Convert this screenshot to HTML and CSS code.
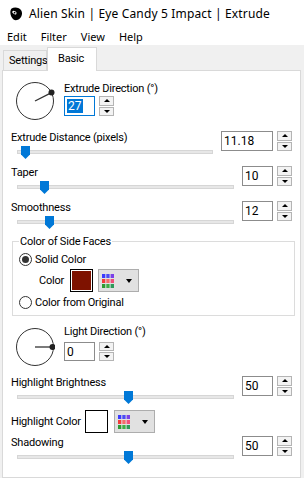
FILE: index.html
```html
<!DOCTYPE html>
<html lang="en">
<head>
<meta charset="UTF-8">
<title>Extrude</title>
<link rel="stylesheet" href="styles.css">
</head>
<body>

<!-- ░░ window title ░░ -->
<header class="titlebar">
  <svg class="app-icon" width="14" height="14" viewBox="0 0 14 14">
    <path d="M2.6 1.6C5.4-.4 10.6.4 12.4 3.8c1.3 2.6.4 5.6-1.6 7.6-1.7 1.8-4.6 2.4-6.6.8C1.6 10.1.1 4.2 2.6 1.6z" fill="#000"/>
    <ellipse cx="5.4" cy="5.6" rx="2.4" ry="1.5" transform="rotate(35 5.4 5.6)" fill="#fff"/>
    <circle cx="5.6" cy="5.7" r=".9" fill="#000"/>
  </svg>
  <span>Alien Skin | Eye Candy 5 Impact | Extrude</span>
</header>

<nav class="menubar">
  <span>Edit</span><span>Filter</span><span>View</span><span>Help</span>
</nav>

<!-- ░░ tabs ░░ -->
<div class="tabs">
  <div class="tab">Settings</div>
  <div class="tab active">Basic</div>
</div>

<main class="panel">

  <div class="dial-row">
    <svg class="dial" width="40" height="40" viewBox="0 0 40 40">
      <circle cx="20" cy="20" r="18.5" fill="none" stroke="#333"/>
      <line x1="20" y1="20" x2="36.5" y2="11.6" stroke="#333" stroke-width="1.3"/>
      <circle cx="36.5" cy="11.6" r="3" fill="#222"/>
    </svg>
    <div class="dial-text">
      <label>Extrude Direction (°)</label>
      <div class="spin">
        <div class="spin-box focus"><span class="sel">27</span></div>
        <div class="spin-btns"><i class="up"></i><i class="down"></i></div>
      </div>
    </div>
  </div>

  <div class="slider first">
    <label>Extrude Distance (pixels)</label>
    <div class="track"><span class="thumb" style="left:3px"></span></div>
    <div class="spin">
      <div class="spin-box wide">11.18</div>
      <div class="spin-btns"><i class="up"></i><i class="down"></i></div>
    </div>
  </div>

  <div class="slider">
    <label>Taper</label>
    <div class="track"><span class="thumb" style="left:22px"></span></div>
    <div class="spin">
      <div class="spin-box">10</div>
      <div class="spin-btns"><i class="up"></i><i class="down"></i></div>
    </div>
  </div>

  <div class="slider">
    <label>Smoothness</label>
    <div class="track"><span class="thumb" style="left:27px"></span></div>
    <div class="spin">
      <div class="spin-box">12</div>
      <div class="spin-btns"><i class="up"></i><i class="down"></i></div>
    </div>
  </div>

  <fieldset class="group">
    <legend>Color of Side Faces</legend>
    <div class="radio"><span class="dot checked"></span>Solid Color</div>
    <div class="color-row">
      <span class="color-label">Color</span>
      <span class="swatch" style="background:#7e1200"></span>
      <button class="palette">
        <svg width="12" height="14" viewBox="0 0 12 14">
          <rect x="0" y="0" width="3.3" height="4" fill="#3a3aff"/>
          <rect x="4.3" y="0" width="3.3" height="4" fill="#4b4bf5"/>
          <rect x="8.6" y="0" width="3.4" height="4" fill="#7a40e8"/>
          <rect x="0" y="5" width="3.3" height="4" fill="#f23c3c"/>
          <rect x="4.3" y="5" width="3.3" height="4" fill="#f56a6a"/>
          <rect x="8.6" y="5" width="3.4" height="4" fill="#f0507a"/>
          <rect x="0" y="10" width="3.3" height="4" fill="#2e9a34"/>
          <rect x="4.3" y="10" width="3.3" height="4" fill="#3fae45"/>
          <rect x="8.6" y="10" width="3.4" height="4" fill="#2e9a5a"/>
        </svg>
        <span class="arrow"></span>
      </button>
    </div>
    <div class="radio second"><span class="dot"></span>Color from Original</div>
  </fieldset>

  <div class="dial-row light">
    <svg class="dial" width="40" height="40" viewBox="0 0 40 40">
      <circle cx="20" cy="20" r="18.5" fill="none" stroke="#333"/>
      <line x1="20" y1="20" x2="38" y2="20" stroke="#333" stroke-width="1.3"/>
      <circle cx="37.5" cy="20" r="3" fill="#222"/>
    </svg>
    <div class="dial-text">
      <label>Light Direction (°)</label>
      <div class="spin">
        <div class="spin-box">0</div>
        <div class="spin-btns"><i class="up"></i><i class="down"></i></div>
      </div>
    </div>
  </div>

  <div class="slider after-dial">
    <label>Highlight Brightness</label>
    <div class="track"><span class="thumb" style="left:106px"></span></div>
    <div class="spin">
      <div class="spin-box">50</div>
      <div class="spin-btns"><i class="up"></i><i class="down"></i></div>
    </div>
  </div>

  <div class="hl-row">
    <span class="hl-label">Highlight Color</span>
    <span class="swatch" style="background:#fff"></span>
    <button class="palette">
      <svg width="12" height="14" viewBox="0 0 12 14">
        <rect x="0" y="0" width="3.3" height="4" fill="#3a3aff"/>
        <rect x="4.3" y="0" width="3.3" height="4" fill="#4b4bf5"/>
        <rect x="8.6" y="0" width="3.4" height="4" fill="#7a40e8"/>
        <rect x="0" y="5" width="3.3" height="4" fill="#f23c3c"/>
        <rect x="4.3" y="5" width="3.3" height="4" fill="#f56a6a"/>
        <rect x="8.6" y="5" width="3.4" height="4" fill="#f0507a"/>
        <rect x="0" y="10" width="3.3" height="4" fill="#2e9a34"/>
        <rect x="4.3" y="10" width="3.3" height="4" fill="#3fae45"/>
        <rect x="8.6" y="10" width="3.4" height="4" fill="#2e9a5a"/>
      </svg>
      <span class="arrow"></span>
    </button>
  </div>

  <div class="slider shadow">
    <label>Shadowing</label>
    <div class="track"><span class="thumb" style="left:106px"></span></div>
    <div class="spin">
      <div class="spin-box">50</div>
      <div class="spin-btns"><i class="up"></i><i class="down"></i></div>
    </div>
  </div>

</main>

</body>
</html>
```

FILE: styles.css
```css
/* ===== base ===== */
html,body{margin:0;height:100%}
body{background:#f0f0f0;color:#000;font:11px/15px Roboto,"Noto Sans",sans-serif;
     display:flex;flex-direction:column;overflow:hidden}
label,span{white-space:nowrap}

/* ---------- title + menu ---------- */
.titlebar{flex:none;height:27px;background:#fff;display:flex;align-items:center;gap:6px;padding-left:9px;
          font-family:"Noto Sans",sans-serif;font-size:12px;letter-spacing:.15px}
.app-icon{flex:none}
.menubar{flex:none;height:18px;background:#fff;display:flex;align-items:center;gap:14px;padding-left:7px;
         font-family:"Noto Sans",sans-serif}

/* ---------- tabs ---------- */
.tabs{flex:none;display:flex;align-items:flex-end;height:23px;margin:2px 0 0 2px;letter-spacing:-.2px}
.tab{box-sizing:border-box;height:20px;width:44px;margin-left:1px;padding-left:5px;line-height:19px;
     border:1px solid #d9d9d9;border-bottom:none}
.tab.active{height:24px;width:50px;margin:0 0 -1px 0;padding-left:10px;line-height:22px;
            background:#fff;position:relative;z-index:1}

/* ---------- panel ---------- */
.panel{flex:1;margin:0 3px 0 2px;padding-top:10px;background:#fff;border:1px solid #d9d9d9;letter-spacing:-.2px}

/* dial rows */
.dial-row{display:flex;align-items:flex-start;padding-left:12px}
.dial{flex:none}
.dial-text{margin-left:9px;display:flex;flex-direction:column;align-items:flex-start}
.dial-row.light{margin-top:8px}
.dial-row.light .dial{margin-top:3px}
.dial-row.light .spin{margin-top:3px}
.dial-row.light .spin-box,.dial-row.light .spin-btns{height:19px}

/* slider rows */
.slider{display:grid;grid-template-columns:1fr auto;grid-template-rows:15px 20px;column-gap:8px;padding:0 8px}
.slider label{grid-column:1;grid-row:1}
.track{grid-column:1;grid-row:2;align-self:start;position:relative;height:2px;margin:5px 0 0 6px;
       border:1px solid #d6d6d6;background:#e7e7e7}
.thumb{position:absolute;top:-5px;width:9px;height:13px;background:#0078d7;
       clip-path:polygon(0 0,100% 0,100% 65%,50% 100%,0 65%)}
.slider .spin{grid-column:2;grid-row:1/3;align-self:start;margin-top:1px}
.slider.first{margin-top:9px}
.slider.after-dial{margin-top:8px}
.slider.shadow{margin-top:2px}

/* spin boxes */
.spin{display:flex;gap:4px;letter-spacing:0}
.spin-box{box-sizing:border-box;width:31px;height:20px;padding-left:2px;line-height:18px;font-size:12px;
          border:1px solid #8c8c8c;background:#fff}
.spin-box.wide{width:52px}
.spin-box.focus{border-color:#0078d7}
.sel{background:#0078d7;color:#fff;padding:0 1px}
.spin-btns{box-sizing:border-box;width:15px;height:20px;display:flex;flex-direction:column;gap:1px}
.spin-btns i{flex:1;display:flex;align-items:center;justify-content:center;
             border:1px solid #b4b4b4;background:#f3f3f3}
.spin-btns i::after{content:"";border-left:3px solid transparent;border-right:3px solid transparent}
.spin-btns .up::after{border-bottom:3px solid #000}
.spin-btns .down::after{border-top:3px solid #000}

/* ---------- colour group ---------- */
.group{margin:-1px 5px 0 9px;padding:3px 0 5px 6px;border:1px solid #dcdcdc;min-width:0}
.group legend{padding:0 1px}
.radio{display:flex;align-items:center;height:15px}
.radio.second{margin-top:3px}
.dot{box-sizing:border-box;width:13px;height:13px;margin-right:3px;border:1px solid #333;border-radius:50%;
     display:flex;align-items:center;justify-content:center}
.dot.checked::after{content:"";width:7px;height:7px;border-radius:50%;background:#333}
.color-row{display:flex;align-items:center;margin-top:2px}
.color-label{width:31px;margin-left:20px}
.swatch{box-sizing:border-box;width:23px;height:23px;border:1px solid #000;box-shadow:inset 0 0 0 1px #fff}
.palette{box-sizing:border-box;width:41px;height:23px;margin-left:5px;padding:0 0 0 3px;
         display:flex;align-items:center;border:1px solid #adadad;background:#e1e1e1}
.arrow{margin-left:12px;border-left:3.5px solid transparent;border-right:3.5px solid transparent;border-top:4px solid #000}

/* highlight colour row */
.hl-row{display:flex;align-items:center;height:23px;padding-left:8px}
.hl-label{width:74px}
.hl-row .palette{margin-left:6px}
```
